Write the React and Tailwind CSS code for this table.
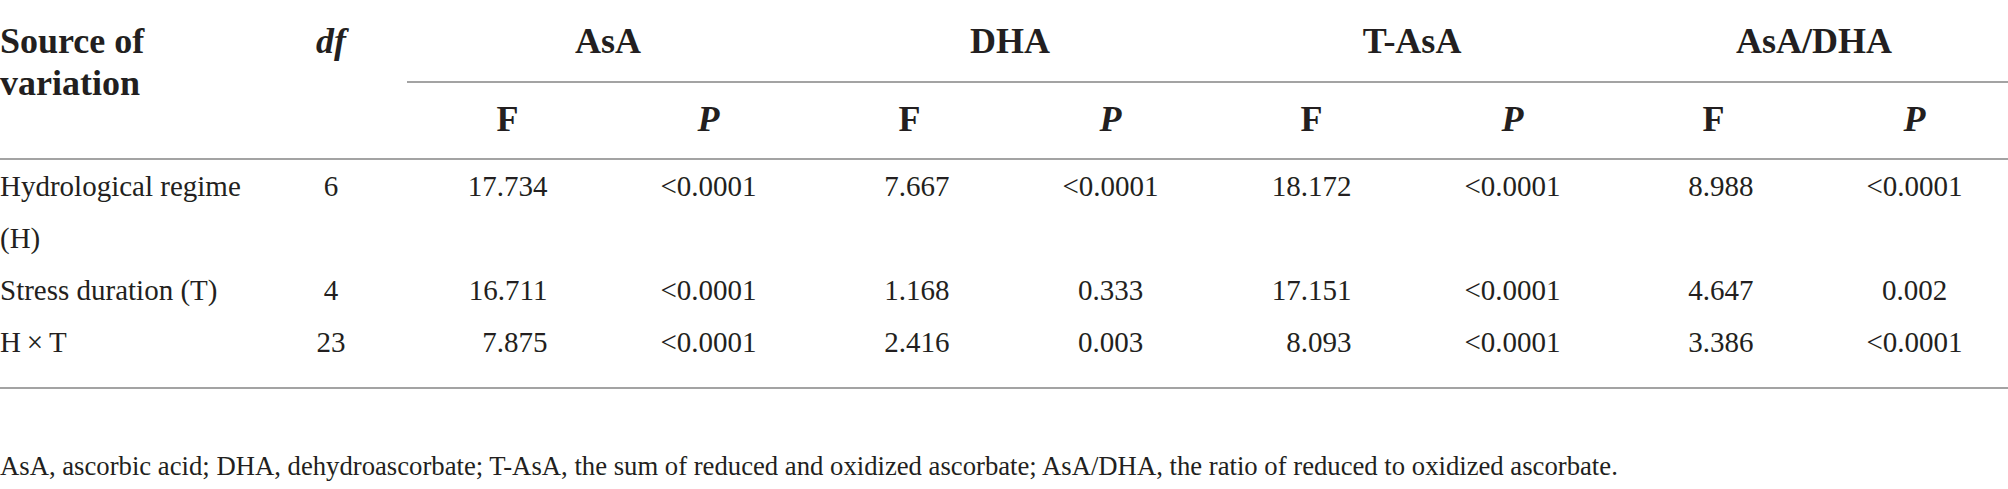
import React from "react";

const groups = ["AsA", "DHA", "T-AsA", "AsA/DHA"];

const rows = [
  { src: "Hydrological regime (H)", df: "6", v: ["17.734", "<0.0001", "7.667", "<0.0001", "18.172", "<0.0001", "8.988", "<0.0001"] },
  { src: "Stress duration (T)", df: "4", v: ["16.711", "<0.0001", "1.168", "0.333", "17.151", "<0.0001", "4.647", "0.002"] },
  { src: "H\u2009\u00d7\u2009T", df: "23", v: ["7.875", "<0.0001", "2.416", "0.003", "8.093", "<0.0001", "3.386", "<0.0001"] },
];

export default function App() {
  return (
    <div className="w-[2008px] h-[489px] bg-white text-[#231f20] font-['Liberation_Serif',serif] overflow-hidden">
      <table className="w-[2015px] max-w-none table-fixed border-collapse">
        <colgroup>
          <col className="w-[255px]" />
          <col className="w-[152px]" />
          <col className="w-[201px]" />
          <col className="w-[201px]" />
          <col className="w-[201px]" />
          <col className="w-[201px]" />
          <col className="w-[201px]" />
          <col className="w-[201px]" />
          <col className="w-[201px]" />
          <col className="w-[201px]" />
        </colgroup>
        <thead className="text-[36px] leading-[42px] font-bold">
          <tr className="h-[82px]">
            <th rowSpan={2} className="p-0 pt-[20px] align-top text-left font-bold border-b-2 border-[#a3a3a3]">
              Source of
              <br />
              variation
            </th>
            <th rowSpan={2} className="p-0 pt-[20px] align-top text-center italic font-bold border-b-2 border-[#a3a3a3]">
              df
            </th>
            {groups.map((g) => (
              <th key={g} colSpan={2} className="p-0 pt-[20px] align-top text-center font-bold border-b-2 border-[#a3a3a3]">
                {g}
              </th>
            ))}
          </tr>
          <tr className="h-[77px]">
            {groups.map((g) => (
              <React.Fragment key={g}>
                <th className="p-0 pt-[15px] align-top text-center font-bold border-b-2 border-[#a3a3a3]">F</th>
                <th className="p-0 pt-[15px] align-top text-center font-bold italic border-b-2 border-[#a3a3a3]">P</th>
              </React.Fragment>
            ))}
          </tr>
        </thead>
        <tbody className="text-[29px] leading-[52px]">
          {rows.map((r, ri) => {
            const last = ri === rows.length - 1;
            const cell = last ? "p-0 pb-[19px] align-top border-b-2 border-[#a3a3a3]" : "p-0 align-top";
            return (
              <tr key={ri}>
                <td className={cell + " text-left"}>{r.src}</td>
                <td className={cell + " text-center"}>{r.df}</td>
                {r.v.map((x, i) => (
                  <td key={i} className={cell + " text-center"}>
                    {i % 2 === 0 ? (
                      <span className="inline-block w-[80px] text-right">{x}</span>
                    ) : (
                      x
                    )}
                  </td>
                ))}
              </tr>
            );
          })}
        </tbody>
      </table>
      <p className="mt-[58px] text-[26.7px] leading-[39px]">
        AsA, ascorbic acid; DHA, dehydroascorbate; T-AsA, the sum of reduced and oxidized ascorbate; AsA/DHA, the ratio of reduced to oxidized ascorbate.
      </p>
    </div>
  );
}
